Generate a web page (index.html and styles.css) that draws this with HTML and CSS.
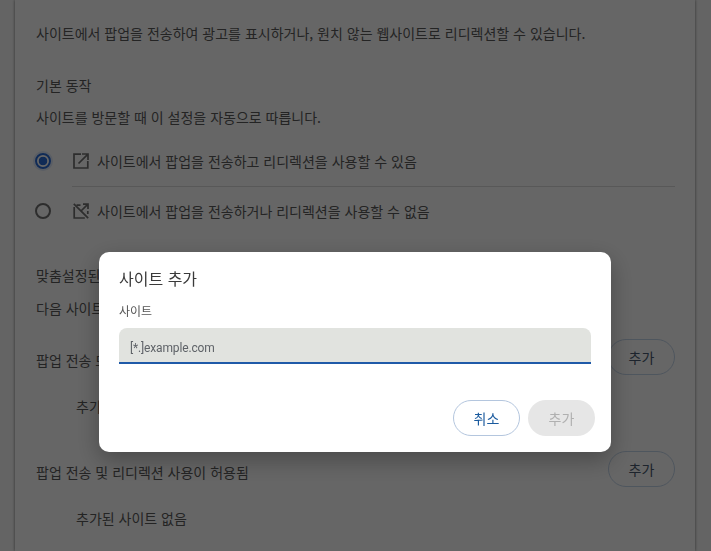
FILE: index.html
```html
<!DOCTYPE html>
<html lang="ko">
<head>
<meta charset="utf-8">
<title>팝업 및 리디렉션</title>
<link rel="stylesheet" href="styles.css">
</head>
<body>
<main class="card">
  <p class="line intro">사이트에서 팝업을 전송하여 광고를 표시하거나, 원치 않는 웹사이트로 리디렉션할 수 있습니다.</p>
  <h2 class="line head-default">기본 동작</h2>
  <p class="line sub">사이트를 방문할 때 이 설정을 자동으로 따릅니다.</p>
  <div class="option option-first">
    <span class="radio radio-on"></span>
    <svg class="icon" viewBox="0 0 16 16" aria-hidden="true"><path d="M8 1.2H1v13.8h13.8V8" /><path d="M5.5 10.5 14.2 1.8M9 1h6v6" /></svg>
    <span class="option-text">사이트에서 팝업을 전송하고 리디렉션을 사용할 수 있음</span>
  </div>
  <div class="divider"></div>
  <div class="option">
    <span class="radio"></span>
    <svg class="icon" viewBox="0 0 16 16" aria-hidden="true"><path d="M7.5 2.2h-4M1.2 4v11h10.6M14.8 8v3" /><path d="M8.5 7.5 14.2 1.8M10 1.2h5V6M.8.8l14.4 14.4" /></svg>
    <span class="option-text">사이트에서 팝업을 전송하거나 리디렉션을 사용할 수 없음</span>
  </div>
  <h2 class="line head-custom">맞춤설정된 동작</h2>
  <p class="line sub-custom">다음 사이트는 기본 설정 대신 맞춤 설정을 따릅니다.</p>
  <section class="list-head list-head-first">
    <span class="list-title">팝업 전송 또는 리디렉션 사용이 허용되지 않음</span>
    <span class="add-btn">추가</span>
  </section>
  <p class="empty">추가된 사이트 없음</p>
  <section class="list-head list-head-second">
    <span class="list-title">팝업 전송 및 리디렉션 사용이 허용됨</span>
    <span class="add-btn">추가</span>
  </section>
  <p class="empty">추가된 사이트 없음</p>
</main>
<div class="scrim">
  <div class="dialog" role="dialog" aria-label="사이트 추가">
    <h1 class="dialog-title">사이트 추가</h1>
    <label class="field-label" for="site">사이트</label>
    <div class="field"><input class="field-input" id="site" placeholder="[*.]example.com"></div>
    <div class="actions">
      <button class="btn btn-cancel">취소</button>
      <button class="btn btn-add" disabled>추가</button>
    </div>
  </div>
</div>
</body>
</html>
```
FILE: styles.css
```css
* { box-sizing: border-box; }
html, body { margin: 0; height: 551px; overflow: hidden; }
body {
  background: #fbfbfb;
  font-family: "Noto Sans CJK KR", "Noto Sans", sans-serif;
  font-size: 14px;
  color: #5a5a5a;
  padding-left: 15px;
}
.card {
  width: 680px;
  height: 551px;
  background: #ffffff;
  box-shadow: 0 0 3px rgba(0,0,0,.55);
  padding-left: 21px;
  overflow: hidden;
}
.line, .empty { margin: 0; font-weight: 400; font-size: 14px; line-height: 20px; white-space: nowrap; }
.intro { padding-top: 23px; height: 43px; }
.head-default { margin-top: 32px; }
.sub { margin-top: 12px; }
.option { display: flex; align-items: center; height: 20px; margin-left: -1px; }
.option-first { margin-top: 24px; }
.radio {
  width: 16px; height: 16px;
  border: 2px solid #707070;
  border-radius: 50%;
  flex: none;
  margin-right: 22px;
}
.radio-on {
  border-color: #2a6cd8;
  background: radial-gradient(circle, #2a6cd8 0 4px, transparent 4.6px);
  box-shadow: 0 0 0 2px rgba(42,108,216,.15);
}
.icon {
  width: 16px; height: 16px; flex: none; margin-right: 8px;
  fill: none; stroke: #707070; stroke-width: 1.7;
}
.option-text { white-space: nowrap; }
.divider { height: 1px; background: #dcdcdc; margin: 15px 20px 14px 36px; }
.head-custom { margin-top: 44px; }
.sub-custom { margin-top: 13px; }
.list-head { display: flex; align-items: flex-start; justify-content: space-between; height: 36px; padding-right: 20px; }
.list-head-first { margin-top: 21px; }
.list-head-second { margin-top: 35px; }
.list-title { white-space: nowrap; line-height: 20px; padding-top: 11px; }
.add-btn {
  width: 67px; height: 36px;
  border: 1px solid #c4d6ea;
  border-radius: 18px;
  display: flex; align-items: center; justify-content: center;
  color: #4a5a70;
}
.empty { padding-left: 40px; margin-top: 21px; }

.scrim {
  position: fixed; inset: 0;
  background: rgba(0,0,0,.6);
  display: flex; justify-content: center; align-items: flex-start;
  padding: 252px 1px 0 0;
}
.dialog {
  width: 512px; height: 200px;
  background: #fff;
  border-radius: 10px;
  padding: 14px 16px 0 20px;
  box-shadow: 0 8px 24px rgba(0,0,0,.3);
  display: flex; flex-direction: column;
}
.dialog-title { margin: 0; font-size: 16px; font-weight: 400; line-height: 24px; color: #3a3a3a; }
.field-label { margin-top: 13px; font-size: 12px; line-height: 16px; color: #555; }
.field {
  margin-top: 9px;
  width: 472px; height: 36px;
  background: #e1e3df;
  border-radius: 8px 8px 0 0;
  border-bottom: 2px solid #1f5aa8;
}
.field-input {
  width: 100%; height: 100%;
  border: 0; outline: 0; background: transparent;
  padding: 6px 11px 0;
  font-family: "Roboto", "Noto Sans CJK KR", sans-serif;
  font-size: 12px;
  letter-spacing: -.15px;
  color: #1f1f1f;
}
.field-input::placeholder { color: #5f6368; opacity: 1; }
.actions { display: flex; justify-content: flex-end; gap: 8px; margin-top: 36px; }
.btn {
  width: 67px; height: 36px;
  border-radius: 18px;
  font-family: inherit; font-size: 14px;
  padding: 0;
}
.btn-cancel { background: #fff; border: 1px solid #b4c6de; color: #1a5a9e; }
.btn-add { background: #e6e6e6; border: 0; color: #b0b0b0; }
```
